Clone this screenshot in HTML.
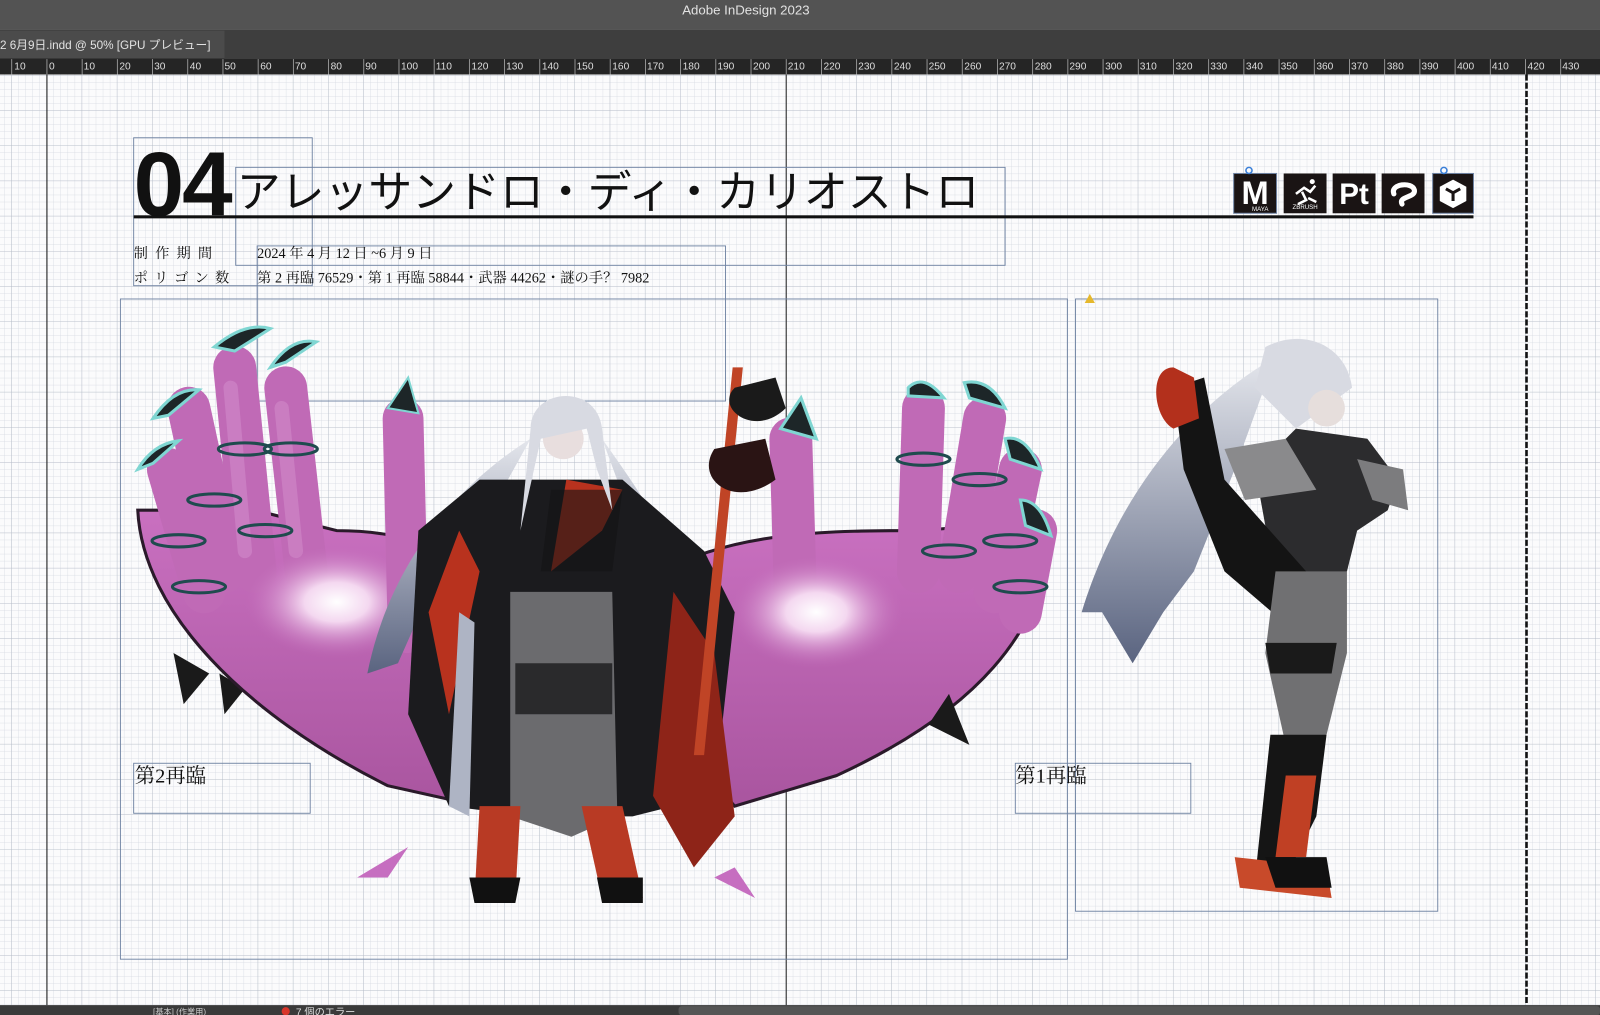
<!DOCTYPE html>
<html><head><meta charset="utf-8"><style>
html,body{margin:0;padding:0;width:1600px;height:1015px;overflow:hidden;background:#fff}
svg{display:block}
</style></head><body>
<svg width="1600" height="1015" viewBox="0 0 1568 994.7" xmlns="http://www.w3.org/2000/svg" font-family="'Liberation Sans','Noto Sans CJK JP',sans-serif">
<defs>
<pattern id="minor" x="46" y="74" width="6.9" height="6.9" patternUnits="userSpaceOnUse">
<path d="M6.9 0V6.9H0" fill="none" stroke="#d3d8e0" stroke-width="0.7"/></pattern>
<pattern id="major" x="46" y="74" width="34.5" height="34.5" patternUnits="userSpaceOnUse">
<path d="M34.5 0V34.5H0" fill="none" stroke="#b3bac6" stroke-width="0.8"/></pattern>
<radialGradient id="glow" cx="0.5" cy="0.5" r="0.5"><stop offset="0" stop-color="#fff"/><stop offset="0.35" stop-color="#f4d8f0"/><stop offset="1" stop-color="#c46ebc" stop-opacity="0"/></radialGradient>
<linearGradient id="hair" x1="0" y1="0" x2="0" y2="1"><stop offset="0" stop-color="#e4e6ec"/><stop offset="1" stop-color="#5a6480"/></linearGradient>
<linearGradient id="palm" x1="0" y1="0" x2="0" y2="1"><stop offset="0" stop-color="#c970c0"/><stop offset="1" stop-color="#a9559f"/></linearGradient>
</defs>
<rect x="0" y="73" width="1568" height="912" fill="#fbfbfc"/>
<rect x="0" y="73" width="1568" height="912" fill="url(#minor)"/>
<rect x="0" y="73" width="1568" height="912" fill="url(#major)"/>
<line x1="46" y1="73" x2="46" y2="985" stroke="#111" stroke-width="1"/>
<line x1="770.5" y1="73" x2="770.5" y2="985" stroke="#222" stroke-width="1"/>
<line x1="1496" y1="73" x2="1496" y2="985" stroke="#111" stroke-width="2.5" stroke-dasharray="6 2"/>

<g fill="none" stroke="#6e82a2" stroke-width="0.9">
<rect x="131" y="135" width="175" height="145"/>
<rect x="231" y="164" width="754" height="96"/>
<rect x="252" y="241" width="459" height="152"/>
<rect x="118" y="293" width="928" height="647"/>
<rect x="1054" y="293" width="355" height="600"/>
<rect x="131" y="748" width="173" height="49"/>
<rect x="995" y="748" width="172" height="49"/>
</g>

<text x="131" y="211" font-family="'Liberation Sans',sans-serif" font-weight="bold" font-size="89" fill="#111" letter-spacing="-2">04</text>
<text x="232" y="203" font-family="'Liberation Sans','Noto Sans CJK JP',sans-serif" font-size="43" fill="#111">アレッサンドロ・ディ・カリオストロ</text>
<rect x="131" y="211" width="1313" height="3" fill="#111"/>
<g font-family="'Liberation Serif','Noto Serif CJK SC',serif" font-size="14" fill="#111">
<text x="131" y="253" letter-spacing="7">制作期間</text>
<text x="131" y="277" letter-spacing="6">ポリゴン数</text>
<text x="252" y="253">2024 年 4 月 12 日 ~6 月 9 日</text>
<text x="252" y="277">第 2 再臨 76529・第 1 再臨 58844・武器 44262・謎の手？ 7982</text>
<text x="132" y="767" font-size="20">第2再臨</text>
<text x="995" y="767" font-size="20">第1再臨</text>
</g>

<g>
<rect x="1209" y="170" width="42" height="39" fill="#1a1414" stroke="#6e82a2"/>
<text x="1230" y="200" text-anchor="middle" font-size="32" font-weight="bold" fill="#fff">M</text>
<text x="1235" y="207" text-anchor="middle" font-size="6" fill="#fff">MAYA</text>
<rect x="1258" y="170" width="42" height="39" fill="#1a1414"/>
<path d="M1270 190 l8-6 l6 4 l5-6 M1276 188 l4 8 l-8 4 M1282 194 l8 4" stroke="#fff" stroke-width="2.5" fill="none"/>
<circle cx="1286" cy="178" r="2.5" fill="#fff"/>
<text x="1279" y="205" text-anchor="middle" font-size="6" fill="#fff">ZBRUSH</text>
<rect x="1306" y="170" width="42" height="39" fill="#1a1414"/>
<text x="1327" y="200" text-anchor="middle" font-size="29" font-weight="bold" fill="#fff">Pt</text>
<rect x="1354" y="170" width="42" height="39" fill="#1a1414"/>
<path d="M1366 190 c-4-10 18-12 20-4 c2 8-16 6-12 14" stroke="#fff" stroke-width="5" fill="none" stroke-linecap="round"/>
<rect x="1404" y="170" width="40" height="39" fill="#1a1414" stroke="#6e82a2"/>
<path d="M1424 176 l13 7 v14 l-13 7 l-13-7 v-14z" fill="#fff"/>
<path d="M1424 189 l-7-4 M1424 189 l7-4 M1424 189 v8" stroke="#1a1414" stroke-width="3"/>
<circle cx="1224" cy="167" r="3" fill="none" stroke="#3a7fd8" stroke-width="1.5"/>
<circle cx="1415" cy="167" r="3" fill="none" stroke="#3a7fd8" stroke-width="1.5"/>
</g>
<path d="M1068 288 l5 9 h-10z" fill="#e5b82c"/>

<!-- LEFT HAND -->
<g>
<path d="M170 640 l10 50 l25-30z M215 660 l5 40 l20-25z" fill="#1a1a1a"/>
<path d="M135 500 C140 600 240 700 380 770 L470 790 L500 600 C460 540 400 520 330 520 L250 500 Z" fill="url(#palm)" stroke="#2a1a2a" stroke-width="3"/>
<g stroke="#c06ab6" stroke-width="42" stroke-linecap="round" fill="none">
<path d="M250 560 L230 360"/>
<path d="M220 560 L185 400"/>
<path d="M200 580 L165 460"/>
<path d="M300 560 L280 380"/>
</g>
<g stroke="#cf86c7" stroke-width="14" stroke-linecap="round" fill="none" opacity="0.7">
<path d="M240 540 L226 380"/><path d="M290 540 L276 400"/>
</g>
<g fill="#1d2628" stroke="#7fd6d2" stroke-width="3">
<path d="M210 340 q30-25 55-18 l-35 22z"/><path d="M150 410 q20-30 45-28 l-30 25z"/>
<path d="M135 460 q15-25 40-28 l-25 22z"/><path d="M265 360 q20-30 45-25 l-30 20z"/>
</g>
<g fill="none" stroke="#1f4b4e" stroke-width="3">
<ellipse cx="240" cy="440" rx="26" ry="6"/><ellipse cx="210" cy="490" rx="26" ry="6"/><ellipse cx="175" cy="530" rx="26" ry="6"/>
<ellipse cx="285" cy="440" rx="26" ry="6"/><ellipse cx="195" cy="575" rx="26" ry="6"/><ellipse cx="260" cy="520" rx="26" ry="6"/>
</g>
<ellipse cx="330" cy="590" rx="90" ry="55" fill="url(#glow)"/>
</g>
<path d="M400 620 L395 410" stroke="#c06ab6" stroke-width="40" stroke-linecap="round"/>
<path d="M380 400 l20-30 l10 35z" fill="#1d2628" stroke="#7fd6d2" stroke-width="2"/>

<!-- RIGHT HAND -->
<g>
<path d="M650 560 C720 520 820 520 900 520 L1030 510 C1030 620 950 700 820 760 L720 790 L640 700 Z" fill="url(#palm)" stroke="#2a1a2a" stroke-width="3"/>
<g stroke="#c06ab6" stroke-width="42" stroke-linecap="round" fill="none">
<path d="M900 560 L905 400"/><path d="M940 560 L965 410"/><path d="M975 580 L1000 460"/><path d="M1000 600 L1015 520"/><path d="M780 600 L775 430"/>
</g>
<g fill="#1d2628" stroke="#7fd6d2" stroke-width="3">
<path d="M890 380 q15-15 35 10 l-35-2z"/><path d="M945 375 q25-5 40 25 l-35-10z"/><path d="M985 430 q20-5 35 30 l-30-10z"/><path d="M1000 490 q20 0 30 35 l-25-10z"/><path d="M765 420 l20-30 l15 40z"/>
</g>
<g fill="none" stroke="#1f4b4e" stroke-width="3">
<ellipse cx="905" cy="450" rx="26" ry="6"/><ellipse cx="960" cy="470" rx="26" ry="6"/><ellipse cx="990" cy="530" rx="26" ry="6"/><ellipse cx="930" cy="540" rx="26" ry="6"/><ellipse cx="1000" cy="575" rx="26" ry="6"/>
</g>
<ellipse cx="800" cy="600" rx="85" ry="55" fill="url(#glow)"/>
<path d="M930 680 l20 50 l-40-20z" fill="#1a1a1a"/>
</g>

<!-- CENTRAL CHARACTER -->
<g>
<path d="M520 430 C440 480 380 560 360 660 L390 650 L430 560 L470 520 Z" fill="url(#hair)"/>
<path d="M590 430 C640 500 680 560 690 650 L660 620 Z" fill="url(#hair)"/>
<path d="M410 520 L470 470 L610 470 L690 540 L720 600 L700 780 L620 800 L520 800 L440 790 L400 700Z" fill="#1b1b1e"/>
<path d="M450 520 L420 600 L440 700 L470 560Z" fill="#b8321e"/>
<path d="M660 580 L700 640 L720 800 L680 850 L640 780Z" fill="#8e2418"/>
<path d="M500 580 L600 580 L605 800 L560 820 L500 800Z" fill="#6b6b6e"/>
<path d="M505 650 L600 650 L600 700 L505 700Z" fill="#2a2a2c"/>
<path d="M470 790 L510 790 L505 880 L465 880Z" fill="#b83a24"/>
<path d="M570 790 L610 790 L630 880 L590 880Z" fill="#b83a24"/>
<path d="M460 860 L510 860 L505 885 L465 885Z M585 860 L630 860 L630 885 L590 885Z" fill="#111"/>
<path d="M555 470 L610 480 L590 520 L540 560Z" fill="#b8321e"/>
<path d="M540 480 L610 480 L600 560 L530 560Z" fill="#141414" opacity="0.6"/>
<path d="M450 600 L465 610 L460 800 L440 790Z" fill="#aeb4c4"/>
<circle cx="552" cy="430" r="20" fill="#e8dede"/>
<path d="M520 420 C520 380 585 375 590 420 L600 500 L585 460 L575 420 L530 430 L510 520 Z" fill="#d8dae2"/>
<path d="M718 360 L728 360 L690 740 L680 740Z" fill="#c04426"/>
<path d="M700 440 C680 470 720 500 760 470 L750 430Z" fill="#2a1414"/>
<path d="M720 380 C700 400 740 430 770 400 L760 370Z" fill="#1a1a1a"/>
<path d="M350 860 l50-30 l-20 30z M700 860 l40 20 l-20-30z" fill="#c66ec0"/>
</g>

<!-- RIGHT CHARACTER -->
<g>
<path d="M1250 350 C1180 390 1100 470 1060 600 L1080 600 L1110 650 L1140 600 L1170 560 L1210 460 Z" fill="url(#hair)"/>
<path d="M1240 340 C1280 320 1320 340 1325 380 L1270 420 L1230 380Z" fill="#d8dae2"/>
<circle cx="1300" cy="400" r="18" fill="#e6dedc"/>
<path d="M1270 420 L1340 430 L1370 470 L1360 500 L1330 520 L1320 560 L1250 570 L1230 460Z" fill="#2c2c2e"/>
<path d="M1200 440 L1260 430 L1290 480 L1220 490Z" fill="#8a8a8c"/>
<path d="M1150 380 L1180 370 L1200 470 L1280 560 L1270 620 L1200 560 L1160 460Z" fill="#141414"/>
<path d="M1150 360 C1125 360 1130 410 1150 420 L1175 410 L1170 370Z" fill="#b3301c"/>
<path d="M1250 560 L1320 560 L1320 640 L1300 720 L1260 730 L1240 640Z" fill="#707072"/>
<path d="M1240 630 L1310 630 L1305 660 L1245 660Z" fill="#1a1a1a"/>
<path d="M1245 720 L1300 720 L1290 800 L1260 860 L1230 860Z" fill="#151515"/>
<path d="M1260 760 L1290 760 L1280 840 L1250 840Z" fill="#c04024"/>
<path d="M1210 840 L1300 850 L1305 880 L1215 870Z" fill="#c84a2a"/>
<path d="M1240 840 L1300 840 L1305 870 L1250 870Z" fill="#111"/>
<path d="M1330 450 L1375 460 L1380 500 L1345 490Z" fill="#7c7c7e"/>
</g>

<rect x="0" y="0" width="1568" height="29" fill="#535353"/>
<text x="731" y="14" text-anchor="middle" font-size="13" fill="#e2e2e2">Adobe InDesign 2023</text>
<rect x="0" y="29" width="1568" height="28" fill="#3e3e3e"/>
<rect x="0" y="30" width="220" height="27" fill="#4b4b4b"/>
<text x="0" y="48" font-size="11.5" fill="#e2e2e2">2 6月9日.indd @ 50% [GPU プレビュー]</text>
<rect x="0" y="57" width="1568" height="16" fill="#252525"/>
<g font-size="10" fill="#ddd" stroke="none">
<text x="14" y="68">10</text>
<text x="48" y="68">0</text>
<text x="82" y="68">10</text><text x="117" y="68">20</text><text x="151" y="68">30</text><text x="186" y="68">40</text><text x="220" y="68">50</text><text x="255" y="68">60</text><text x="289" y="68">70</text><text x="324" y="68">80</text><text x="358" y="68">90</text><text x="393" y="68">100</text><text x="427" y="68">110</text><text x="462" y="68">120</text><text x="496" y="68">130</text><text x="531" y="68">140</text><text x="565" y="68">150</text><text x="600" y="68">160</text><text x="634" y="68">170</text><text x="669" y="68">180</text><text x="703" y="68">190</text><text x="738" y="68">200</text><text x="772" y="68">210</text><text x="807" y="68">220</text><text x="841" y="68">230</text><text x="876" y="68">240</text><text x="910" y="68">250</text><text x="945" y="68">260</text><text x="979" y="68">270</text><text x="1014" y="68">280</text><text x="1048" y="68">290</text><text x="1083" y="68">300</text><text x="1117" y="68">310</text><text x="1152" y="68">320</text><text x="1186" y="68">330</text><text x="1221" y="68">340</text><text x="1255" y="68">350</text><text x="1290" y="68">360</text><text x="1324" y="68">370</text><text x="1359" y="68">380</text><text x="1393" y="68">390</text><text x="1428" y="68">400</text><text x="1462" y="68">410</text><text x="1497" y="68">420</text><text x="1531" y="68">430</text>
</g>
<path d="M11.5 58v15M46 58v15M80.5 58v15M115 58v15M149.5 58v15M184 58v15M218.5 58v15M253 58v15M287.5 58v15M322 58v15M356.5 58v15M391 58v15M425.5 58v15M460 58v15M494.5 58v15M529 58v15M563.5 58v15M598 58v15M632.5 58v15M667 58v15M701.5 58v15M736 58v15M770.5 58v15M805 58v15M839.5 58v15M874 58v15M908.5 58v15M943 58v15M977.5 58v15M1012 58v15M1046.5 58v15M1081 58v15M1115.5 58v15M1150 58v15M1184.5 58v15M1219 58v15M1253.5 58v15M1288 58v15M1322.5 58v15M1357 58v15M1391.5 58v15M1426 58v15M1460.5 58v15M1495 58v15M1529.5 58v15" stroke="#aaa" stroke-width="0.8"/>
<rect x="0" y="985" width="1568" height="10" fill="#3a3a3a"/>
<rect x="665" y="986" width="903" height="9" rx="3" fill="#555"/>
<circle cx="280" cy="991" r="4" fill="#d8352a"/>
<text x="150" y="994" font-size="8" fill="#ccc">[基本] (作業用)</text>
<text x="290" y="995" font-size="10" fill="#ddd">7 個のエラー</text>
</svg>
</body></html>
